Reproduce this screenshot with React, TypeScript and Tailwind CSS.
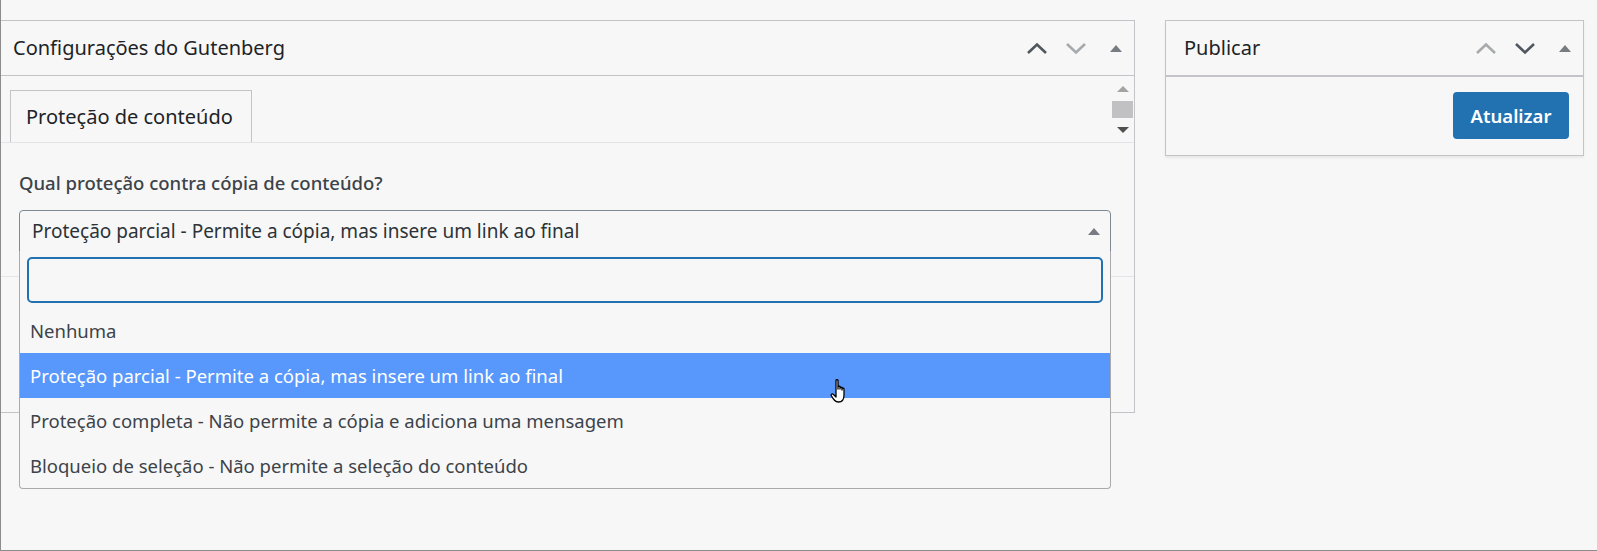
import React from 'react';

const options = [
  'Nenhuma',
  'Proteção parcial - Permite a cópia, mas insere um link ao final',
  'Proteção completa - Não permite a cópia e adiciona uma mensagem',
  'Bloqueio de seleção - Não permite a seleção do conteúdo',
];

const Chevron = ({ up, light }: { up?: boolean; light?: boolean }) => (
  <svg width="22" height="14" viewBox="0 0 22 14" className={light ? 'text-[#a7aaad]' : 'text-[#50575e]'}>
    <path
      d={up ? 'M2 12 L11 3.5 L20 12' : 'M2 3 L11 11.5 L20 3'}
      fill="none"
      stroke="currentColor"
      strokeWidth="2.6"
    />
  </svg>
);

const Caret = () => (
  <svg width="12" height="8" viewBox="0 0 12 8" className="text-[#787c82]">
    <path d="M0 8 L6 1 L12 8 Z" fill="currentColor" />
  </svg>
);

// up / down / toggle buttons of a postbox header
const HeaderActions = ({ upLight, downLight }: { upLight?: boolean; downLight?: boolean }) => (
  <div className="flex items-center">
    <Chevron up light={upLight} />
    <div className="ml-[17px]">
      <Chevron light={downLight} />
    </div>
    <div className="ml-[23px] flex">
      <Caret />
    </div>
  </div>
);

const HandCursor = () => (
  <svg width="20" height="26" viewBox="0 0 20 26" className="absolute left-[829px] top-[378px] z-20">
    <path
      d="M6 2.5 C6 1.5 8 1.5 8 2.5 L8 11 L8 9 C8 8 10 8 10 9 L10 11 L10 10 C10 9 12 9 12 10 L12 12 L12 11 C12 10 14 10 14 11 L14 17 C14 21 12 24 8.5 24 C5 24 3.5 21.5 1.5 18 C0.5 16.5 2 15 3.5 16.5 L6 19 Z"
      fill="#ffffff"
      stroke="#000000"
      strokeWidth="1.3"
      strokeLinejoin="round"
    />
  </svg>
);

const App: React.FC = () => {
  return (
    <div
      className="relative w-[1597px] h-[551px] bg-[#f7f7f7] border-l border-b border-[#8c8c8c] flex items-start pt-[20px] overflow-hidden"
      style={{ fontFamily: '"Noto Sans", "Open Sans", sans-serif' }}
    >
      {/* Configurações do Gutenberg */}
      <div className="relative w-[1135px] h-[393px] ml-[-1px] border border-[#c3c4c7] bg-[#f7f7f7] flex flex-col">
        <div className="h-[55px] border-b border-[#c3c4c7] flex items-center pl-[12px] pr-[12px]">
          <h2 className="text-[20px] text-[#1d2327] flex-1">Configurações do Gutenberg</h2>
          <HeaderActions downLight />
        </div>

        <div className="flex h-[67px] border-b border-[#e2e4e7]">
          <div className="flex-1 flex items-end pl-[9px]">
            <div className="h-[52px] w-[242px] pl-[15px] border border-b-0 border-[#c3c4c7] flex items-center text-[20px] text-[#1d2327]">
              Proteção de conteúdo
            </div>
          </div>
          <div className="w-[23px] flex flex-col items-center pt-[10px] gap-[9px]">
            <svg width="12" height="6" viewBox="0 0 12 6">
              <path d="M0 6 L6 0 L12 6 Z" fill="#a3a3a3" />
            </svg>
            <div className="w-[21px] h-[17px] bg-[#c1c1c4]" />
            <svg width="12" height="6" viewBox="0 0 12 6">
              <path d="M0 0 L6 6 L12 0 Z" fill="#505050" />
            </svg>
          </div>
        </div>

        <div className="px-[18px] pt-[25px] h-[134px] border-b border-[#e2e4e7]">
          <p className="h-[30px] leading-[30px] text-[18.5px] font-medium text-[#3c434a] mb-[12px]">
            Qual proteção contra cópia de conteúdo?
          </p>
          <div className="relative w-[1092px]">
            <div className="h-[42px] border border-[#7e8993] rounded-t-[4px] flex items-center pl-[12px] pr-[10px] text-[19px] text-[#2c3338]">
              <span className="flex-1">{options[1]}</span>
              <Caret />
            </div>
            <div className="absolute left-0 top-[41px] w-full bg-[#f7f7f7] border border-t-0 border-[#aaaaaa] rounded-b-[4px] z-10">
              <div className="px-[7px] pt-[6px] pb-[5px]">
                <div className="h-[46px] border-2 border-[#2271b1] rounded-[5px] bg-[#f7f7f7]" />
              </div>
              {options.map((o, i) => (
                <div
                  key={o}
                  className={
                    i === 1
                      ? 'h-[45px] flex items-center pl-[10px] text-[18.5px] bg-[#5897fb] text-white'
                      : 'h-[45px] flex items-center pl-[10px] text-[18.5px] text-[#3c434a]'
                  }
                >
                  {o}
                </div>
              ))}
            </div>
          </div>
        </div>
      </div>

      {/* Publicar */}
      <div className="ml-[30px] w-[419px] h-[136px] border border-[#c3c4c7] bg-[#f7f7f7] shadow-[0_2px_2px_rgba(0,0,0,0.06)]">
        <div className="h-[56px] border-b-2 border-[#c3c4c7] flex items-center pl-[18px] pr-[12px]">
          <h2 className="text-[20px] text-[#1d2327] flex-1">Publicar</h2>
          <HeaderActions upLight />
        </div>
        <div className="flex justify-end pr-[14px] pt-[15px]">
          <button className="w-[116px] h-[47px] rounded-[4px] bg-[#2271b1] text-white text-[18.5px] font-semibold">
            Atualizar
          </button>
        </div>
      </div>

      <HandCursor />
    </div>
  );
};

export default App;
